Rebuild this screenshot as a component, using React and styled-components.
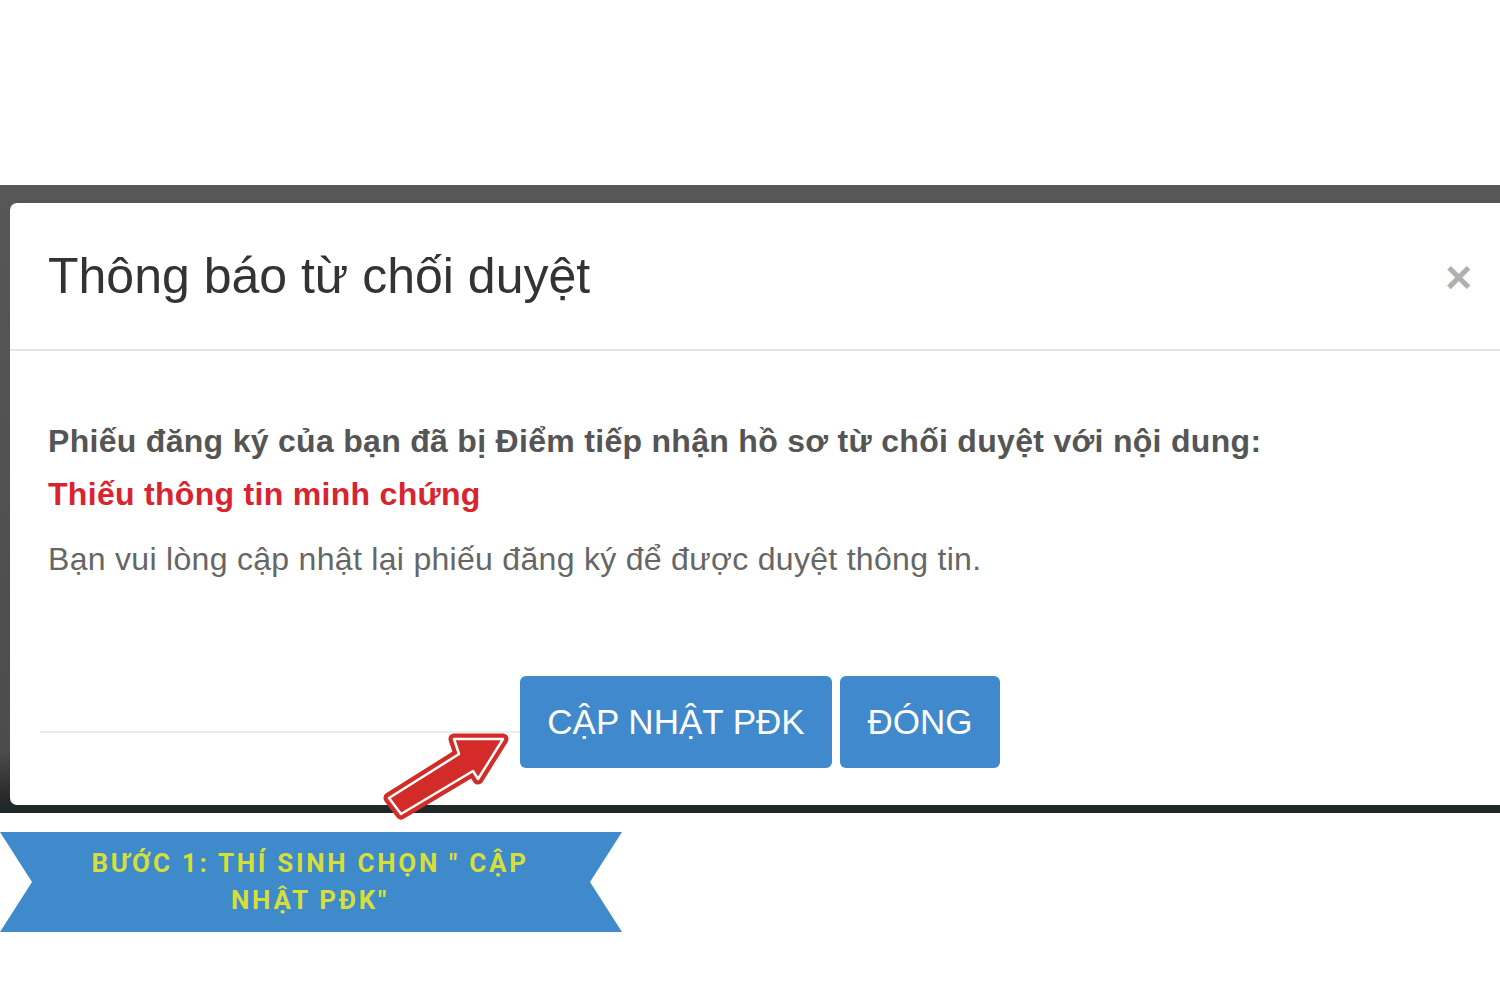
import React from 'react';
import styled, { createGlobalStyle } from 'styled-components';

const GlobalStyle = createGlobalStyle`
  html, body {
    margin: 0;
    padding: 0;
    background: #ffffff;
  }
  body {
    font-family: "Liberation Sans", Arial, sans-serif;
  }
`;

const Page = styled.div`
  position: relative;
  width: 1500px;
  height: 1000px;
  overflow: hidden;
  padding-top: 185px;
  box-sizing: border-box;
  background: #ffffff;
`;

const Backdrop = styled.div`
  width: 1500px;
  height: 628px;
  box-sizing: border-box;
  padding: 18px 0 8px 10px;
  background: linear-gradient(to bottom, #575757 0%, #4c4c4c 90%, #2b2b2b 97%, #1d2727 100%);
`;

const Modal = styled.div`
  width: 1490px;
  height: 602px;
  background: #ffffff;
  border-radius: 7px 0 0 7px;
  display: flex;
  flex-direction: column;
`;

const Header = styled.div`
  height: 148px;
  box-sizing: border-box;
  padding: 0 28px 0 38px;
  display: flex;
  align-items: center;
  justify-content: space-between;
  border-bottom: 2px solid #e6e6e6;
`;

const Title = styled.h1`
  margin: 0;
  font-weight: 400;
  font-size: 50px;
  letter-spacing: 0;
  color: #333333;
`;

const Close = styled.span`
  font-size: 46px;
  font-weight: 700;
  line-height: 1;
  color: #b0b0b0;
  margin-top: 2px;
`;

const Body = styled.div`
  padding: 64px 38px 0 38px;
  display: flex;
  flex-direction: column;
`;

const Line = styled.p`
  margin: 0;
  font-size: 32px;
  line-height: ${(p) => p.$lh || '52px'};
  font-weight: ${(p) => (p.$bold ? 700 : 400)};
  color: ${(p) => p.$color || '#555555'};
  letter-spacing: 0.3px;
`;

const Footer = styled.div`
  margin-top: auto;
  padding: 0 0 37px 30px;
  display: flex;
  align-items: flex-end;
`;

const Rule = styled.div`
  width: 480px;
  height: 2px;
  background: #ececec;
  margin-bottom: 35px;
`;

const Buttons = styled.div`
  display: flex;
  gap: 8px;
`;

const Button = styled.button`
  height: 92px;
  width: ${(p) => p.$w}px;
  border: none;
  border-radius: 6px;
  background: #3f89cc;
  color: #ffffff;
  font-family: "Liberation Sans", Arial, sans-serif;
  font-size: 35px;
  letter-spacing: 0;
  padding: 0;
  cursor: pointer;
`;

const Ribbon = styled.div`
  margin-top: 19px;
  width: 622px;
  height: 100px;
  background: #3f8acb;
  clip-path: polygon(0 0, 100% 0, calc(100% - 32px) 50%, 100% 100%, 0 100%, 32px 50%);
  display: flex;
  align-items: center;
  justify-content: center;
`;

const RibbonText = styled.div`
  font-family: Roboto, "Liberation Sans", sans-serif;
  font-weight: 700;
  font-size: 26px;
  line-height: 37px;
  letter-spacing: 2.7px;
  color: #d6df3a;
  text-align: center;
  margin-right: 2px;
`;

const Arrow = styled.svg`
  position: absolute;
  left: 376px;
  top: 726px;
  width: 140px;
  height: 100px;
  overflow: visible;
`;

const arrowPoints = '13,72 83,28 78,13 127,13 102,53 97,45 25,88';

export default function App() {
  return (
    <>
      <GlobalStyle />
      <Page>
        <Backdrop>
          <Modal>
            <Header>
              <Title>Thông báo từ chối duyệt</Title>
              <Close>×</Close>
            </Header>
            <Body>
              <Line $bold>Phiếu đăng ký của bạn đã bị Điểm tiếp nhận hồ sơ từ chối duyệt với nội dung:</Line>
              <Line $bold $color="#d9232e" $lh="54px">Thiếu thông tin minh chứng</Line>
              <Line $color="#666666" $lh="76px">Bạn vui lòng cập nhật lại phiếu đăng ký để được duyệt thông tin.</Line>
            </Body>
            <Footer>
              <Rule />
              <Buttons>
                <Button $w={312}>CẬP NHẬT PĐK</Button>
                <Button $w={160}>ĐÓNG</Button>
              </Buttons>
            </Footer>
          </Modal>
        </Backdrop>
        <Ribbon>
          <RibbonText>
            BƯỚC 1: THÍ SINH CHỌN " CẬP
            <br />
            NHẬT PĐK"
          </RibbonText>
        </Ribbon>
        <Arrow viewBox="0 0 140 100">
          <polygon points={arrowPoints} fill="#d32b28" stroke="#d32b28" strokeWidth="11" strokeLinejoin="round" />
          <polygon points={arrowPoints} fill="#d32b28" stroke="#ffffff" strokeWidth="2.5" strokeLinejoin="round" />
        </Arrow>
      </Page>
    </>
  );
}
